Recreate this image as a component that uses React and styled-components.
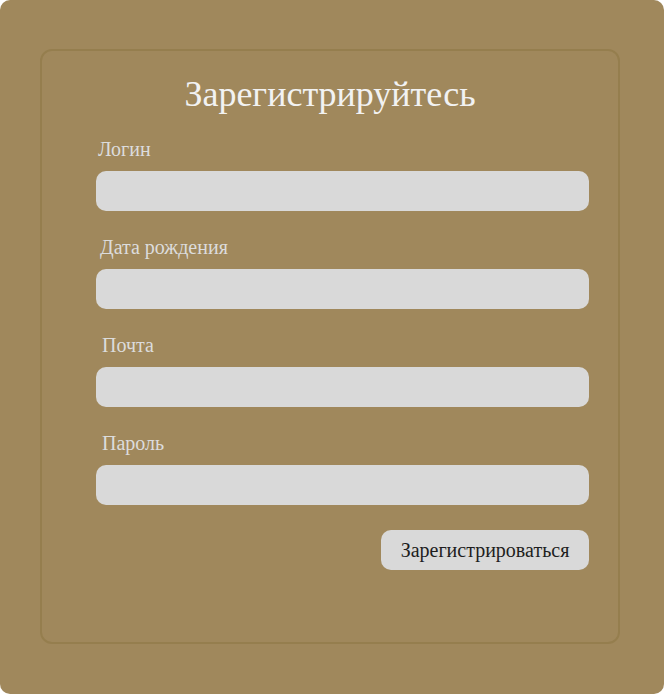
import styled, { createGlobalStyle } from "styled-components";

const GlobalStyle = createGlobalStyle`
  body {
    margin: 0;
    background: #ffffff;
    font-family: 'Liberation Serif', 'Times New Roman', serif;
  }
`;

const Page = styled.div`
  width: 664px;
  height: 694px;
  box-sizing: border-box;
  padding: 49px 0 0 40px;
  background-color: #a0885c;
  border-radius: 10px;
`;

const Card = styled.form`
  width: 580px;
  height: 595px;
  box-sizing: border-box;
  border: 2px solid #957e4e;
  border-radius: 12px;
  padding: 23px 29px 0 54px;
  display: flex;
  flex-direction: column;
`;

const Title = styled.h1`
  margin: 0 0 23px -25px;
  font-size: 36px;
  line-height: 41px;
  font-weight: normal;
  color: #f2f2f2;
  text-align: center;
`;

const Field = styled.label`
  display: flex;
  flex-direction: column;
  gap: 10px;
  margin-bottom: 25px;
`;

const Label = styled.span`
  padding-left: ${(p) => p.$shift || 2}px;
  font-size: 20px;
  color: #dcdcdc;
  line-height: 23px;
`;

const Input = styled.input`
  width: 493px;
  height: 40px;
  box-sizing: border-box;
  border: none;
  border-radius: 10px;
  background-color: #d9d9d9;
  padding: 0 12px;
  font-family: inherit;
  font-size: 16px;
  outline: none;
`;

const Actions = styled.div`
  width: 493px;
  display: flex;
  justify-content: flex-end;
`;

const Button = styled.button`
  width: 208px;
  height: 40px;
  border: none;
  border-radius: 10px;
  background-color: #d9d9d9;
  color: #1e1e1e;
  font-family: inherit;
  font-size: 20px;
  cursor: pointer;
`;

const fields = [
  { label: "Логин", type: "text", shift: 2 },
  { label: "Дата рождения", type: "text", shift: 4 },
  { label: "Почта", type: "email", shift: 6 },
  { label: "Пароль", type: "password", shift: 6 },
];

function App() {
  return (
    <>
      <GlobalStyle />
      <Page>
        <Card onSubmit={(e) => e.preventDefault()}>
          <Title>Зарегистрируйтесь</Title>
          {fields.map((f) => (
            <Field key={f.label}>
              <Label $shift={f.shift}>{f.label}</Label>
              <Input type={f.type} />
            </Field>
          ))}
          <Actions>
            <Button type="submit">Зарегистрироваться</Button>
          </Actions>
        </Card>
      </Page>
    </>
  );
}

export default App;
